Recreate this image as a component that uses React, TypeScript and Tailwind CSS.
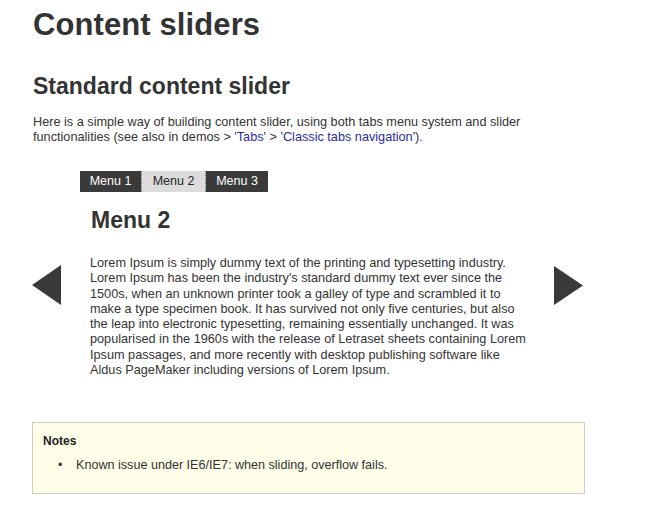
import React from "react";

const font = { fontFamily: '"Liberation Sans", Arial, sans-serif' };

function LeftArrow() {
  return (
    <svg width="30" height="41" viewBox="0 0 30 41">
      <polygon points="29,0 29,40 0,20" fill="#3a3a3a" />
    </svg>
  );
}
function RightArrow() {
  return (
    <svg width="30" height="41" viewBox="0 0 30 41">
      <polygon points="0,0 0,39 29,19.5" fill="#3a3a3a" />
    </svg>
  );
}

export default function App() {
  return (
    <div
      className="w-[650px] h-[515px] bg-white text-[#333] overflow-hidden pl-[33px] pt-[7px]"
      style={font}
    >
      <h1 className="text-[31px] leading-[36px] font-bold tracking-[0.1px]">Content sliders</h1>
      <h2 className="mt-[30px] text-[23px] leading-[26px] font-bold">Standard content slider</h2>
      <p className="mt-[16px] text-[12.7px] leading-[14.5px] w-[520px]">
        Here is a simple way of building content slider, using both tabs menu system and slider
        functionalities (see also in demos &gt; <span className="text-[#2b2ba0]">'Tabs'</span> &gt;{" "}
        <span className="text-[#2b2ba0]">'Classic tabs navigation'</span>).
      </p>

      <div className="mt-[27px] flex items-start -ml-[1px]">
        <div className="w-[48px] pt-[94px]">
          <LeftArrow />
        </div>
        <div className="w-[474px]">
          <div className="flex h-[21px] text-[12.5px] leading-[21px]">
            <div className="w-[61px] bg-[#3a3a3a] text-white text-center">Menu 1</div>
            <div className="w-[65px] bg-[#dcdcdc] text-[#222] text-center border-x border-dotted border-[#777]">
              Menu 2
            </div>
            <div className="w-[62px] bg-[#3a3a3a] text-white text-center">Menu 3</div>
          </div>
          <h3 className="mt-[14px] ml-[11px] text-[23px] leading-[28px] font-bold">Menu 2</h3>
          <p className="mt-[22px] ml-[10px] w-[442px] text-[12.7px] leading-[15.3px]">
            Lorem Ipsum is simply dummy text of the printing and typesetting industry. Lorem Ipsum
            has been the industry's standard dummy text ever since the 1500s, when an unknown
            printer took a galley of type and scrambled it to make a type specimen book. It has
            survived not only five centuries, but also the leap into electronic typesetting,
            remaining essentially unchanged. It was popularised in the 1960s with the release of
            Letraset sheets containing Lorem Ipsum passages, and more recently with desktop
            publishing software like Aldus PageMaker including versions of Lorem Ipsum.
          </p>
        </div>
        <div className="pt-[95px]">
          <RightArrow />
        </div>
      </div>

      <div className="mt-[44px] -ml-[1px] w-[553px] h-[72px] border border-[#cfcfc4] bg-[#fefee9] pl-[10px] pt-[11px]">
        <div className="text-[12px] leading-[15px] font-bold text-[#222]">Notes</div>
        <ul className="mt-[9px] text-[12.6px] leading-[15px]">
          <li className="flex">
            <span className="w-[33px] pl-[15px]">•</span>
            <span>Known issue under IE6/IE7: when sliding, overflow fails.</span>
          </li>
        </ul>
      </div>
    </div>
  );
}
